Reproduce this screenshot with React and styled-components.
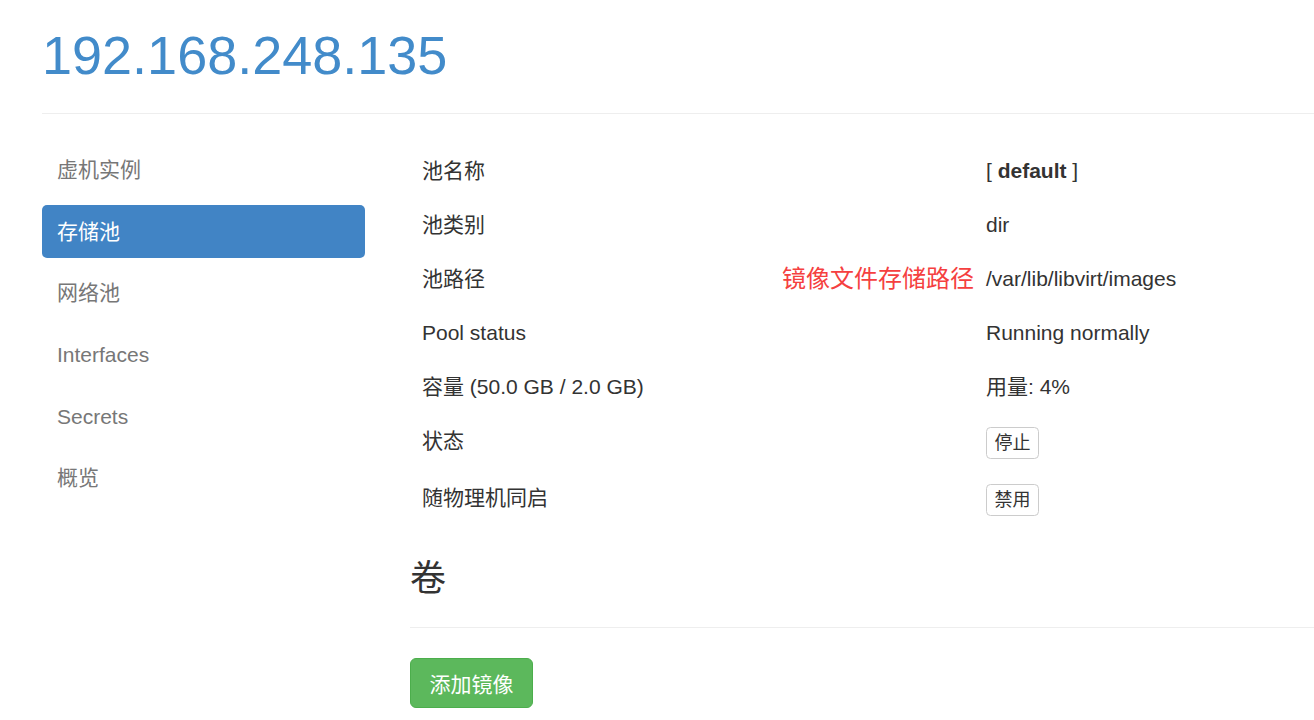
import styled, { createGlobalStyle } from "styled-components";

const GlobalStyle = createGlobalStyle`
  html, body {
    margin: 0;
    padding: 0;
    background: #fff;
    overflow: hidden;
  }
  body {
    font-family: "Liberation Sans", "Noto Sans CJK SC", sans-serif;
    font-size: 21px;
    line-height: 30px;
    color: #333;
  }
`;

const Page = styled.div`
  padding: 26px 0 0 42px;
`;

const PageHeader = styled.div`
  padding-bottom: 28px;
  border-bottom: 1px solid #eee;
`;

const Title = styled.h1`
  margin: 0;
  font-size: 54px;
  line-height: 59.4px;
  font-weight: 400;
  color: #428bca;
`;

const Main = styled.div`
  display: flex;
  gap: 45px;
  margin-top: 30px;
`;

const Nav = styled.ul`
  list-style: none;
  margin: -1px 0 0;
  padding: 0;
  width: 323px;
  flex-shrink: 0;
  display: flex;
  flex-direction: column;
  gap: 8.7px;
`;

const NavItem = styled.li`
  height: 53px;
  display: flex;
  align-items: center;
  padding: 0 15px;
  border-radius: 5px;
  color: ${(p) => (p.$active ? "#fff" : "#777")};
  background: ${(p) => (p.$active ? "#4184c5" : "transparent")};
`;

const Content = styled.div`
  flex: 1;
  min-width: 0;
`;

const Row = styled.div`
  display: grid;
  grid-template-columns: 564px 1fr;
  align-items: start;
`;

const Cell = styled.div`
  position: relative;
  padding: 12px;
  white-space: nowrap;
`;

const Note = styled.span`
  position: absolute;
  right: 100%;
  top: 12px;
  font-size: 24px;
  line-height: 30px;
  color: #f54040;
  white-space: nowrap;
`;

const SmallButton = styled.button`
  display: block;
  box-sizing: border-box;
  height: 32px;
  margin: 1px 0 0;
  font-family: inherit;
  font-size: 18px;
  line-height: 27px;
  padding: 0 7.5px;
  color: #333;
  background: #fff;
  border: 1px solid #ccc;
  border-radius: 4.5px;
`;

const SectionHeader = styled.div`
  margin-top: 31px;
  padding-bottom: 28px;
  border-bottom: 1px solid #eee;
`;

const SectionTitle = styled.h3`
  margin: 0;
  font-size: 36px;
  line-height: 39.6px;
  font-weight: 400;
  color: #333;
`;

const AddButton = styled.button`
  margin-top: 30px;
  height: 50px;
  padding: 0 18.5px;
  font-family: inherit;
  font-size: 21px;
  color: #fff;
  background: #5cb85c;
  border: 1px solid #4cae4c;
  border-radius: 6px;
`;

const navItems = ["虚机实例", "存储池", "网络池", "Interfaces", "Secrets", "概览"];

export default function App() {
  return (
    <>
      <GlobalStyle />
      <Page>
        <PageHeader>
          <Title>192.168.248.135</Title>
        </PageHeader>
        <Main>
          <Nav>
            {navItems.map((item) => (
              <NavItem key={item} $active={item === "存储池"}>
                {item}
              </NavItem>
            ))}
          </Nav>
          <Content>
            <Row>
              <Cell>池名称</Cell>
              <Cell>
                [ <b>default</b> ]
              </Cell>
            </Row>
            <Row>
              <Cell>池类别</Cell>
              <Cell>dir</Cell>
            </Row>
            <Row>
              <Cell>池路径</Cell>
              <Cell>
                <Note>镜像文件存储路径</Note>
                /var/lib/libvirt/images
              </Cell>
            </Row>
            <Row>
              <Cell>Pool status</Cell>
              <Cell>Running normally</Cell>
            </Row>
            <Row>
              <Cell>容量 (50.0 GB / 2.0 GB)</Cell>
              <Cell>用量: 4%</Cell>
            </Row>
            <Row>
              <Cell>状态</Cell>
              <Cell>
                <SmallButton>停止</SmallButton>
              </Cell>
            </Row>
            <Row>
              <Cell>随物理机同启</Cell>
              <Cell>
                <SmallButton>禁用</SmallButton>
              </Cell>
            </Row>
            <SectionHeader>
              <SectionTitle>卷</SectionTitle>
            </SectionHeader>
            <AddButton>添加镜像</AddButton>
          </Content>
        </Main>
      </Page>
    </>
  );
}
